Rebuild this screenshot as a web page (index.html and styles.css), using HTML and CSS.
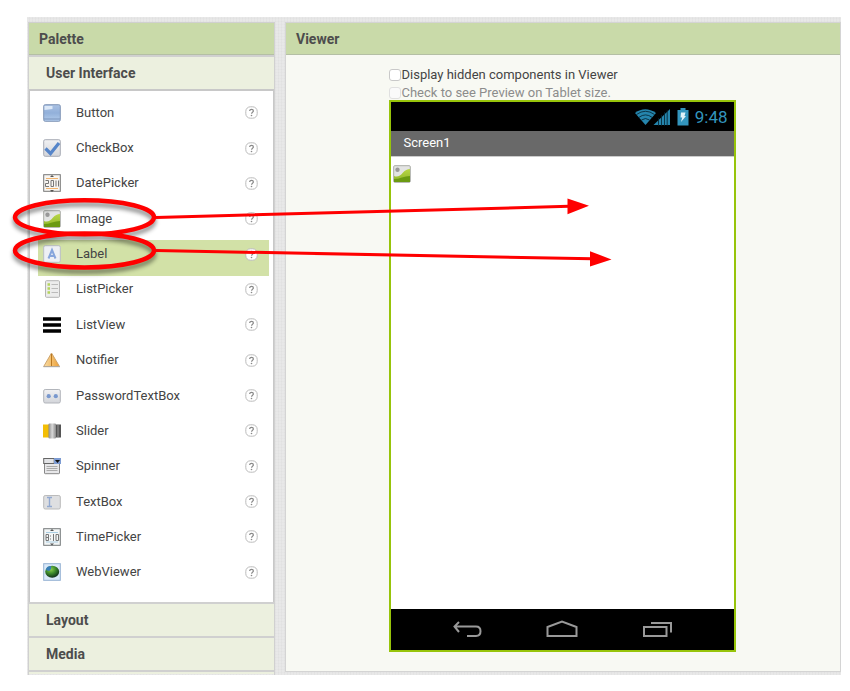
FILE: index.html
```
<!DOCTYPE html>
<html lang="en">
<head>
<meta charset="utf-8">
<title>Designer</title>
<link rel="stylesheet" href="styles.css">
</head>
<body>
<svg class="defs" aria-hidden="true">
  <defs>
    <linearGradient id="blue" x1="0" y1="0" x2="0" y2="1"><stop offset="0" stop-color="#a9c1e3"/><stop offset=".5" stop-color="#92b0da"/><stop offset="1" stop-color="#b4cdec"/></linearGradient>
    <linearGradient id="grey" x1="0" y1="0" x2="0" y2="1"><stop offset="0" stop-color="#f1f1f3"/><stop offset="1" stop-color="#d3d5da"/></linearGradient>
    <linearGradient id="leaf" x1="0" y1="0" x2="0" y2="1"><stop offset="0" stop-color="#b9d645"/><stop offset="1" stop-color="#8db52a"/></linearGradient>
    <linearGradient id="amber" x1="0" y1="0" x2="1" y2="0"><stop offset="0" stop-color="#f8dda6"/><stop offset="1" stop-color="#eea035"/></linearGradient>
    <linearGradient id="knob" x1="0" y1="0" x2="1" y2="0"><stop offset="0" stop-color="#8a8a8a"/><stop offset=".5" stop-color="#d8d8d8"/><stop offset="1" stop-color="#8a8a8a"/></linearGradient>
    <radialGradient id="globe" cx=".4" cy=".3" r=".7"><stop offset="0" stop-color="#8ed04c"/><stop offset=".5" stop-color="#3c8a2c"/><stop offset="1" stop-color="#12301c"/></radialGradient>
    <symbol id="help" viewBox="0 0 13 13"><rect x=".8" y=".8" width="11.4" height="11.4" rx="4.5" fill="#fff" stroke="#bbb"/><path d="M4.700 5.100c0-2.400 3.700-2.300 3.700 0 0 1.200-1.800 1.300-1.800 2.600" fill="none" stroke="#888" stroke-width="1.200"/><circle cx="6.500" cy="9.500" r=".8" fill="#888"/></symbol>
    <symbol id="image" viewBox="0 0 18 18"><rect x=".7" y=".7" width="16.600" height="16.600" rx="1" fill="#e3e4e3" stroke="#a9aca5"/><circle cx="4.500" cy="4.800" r="2.200" fill="#999"/><path d="M1 11q5 2 9-3.500Q13 4 17 4v13H1z" fill="url(#leaf)"/><path d="M1 14q4 0 8-1.500t8-1.500v6H1z" fill="#6b9a12"/></symbol>
  </defs>
</svg>
<main class="workspace">
  <section class="palette">
    <h2 class="panel-title">Palette</h2>
    <button class="section" type="button">User Interface</button>
    <ul class="components">
      <li class="component"><svg class="icon" viewBox="0 0 18 18"><rect x=".7" y=".7" width="16.600" height="16.600" rx="1.500" fill="url(#blue)" stroke="#8297b7"/><path d="M1.500 2h8v3l-8 1z" fill="#dce8f7"/><path d="M1 15h16" stroke="#7892ba"/></svg><span>Button</span><button class="help" type="button" aria-label="Button help"><svg viewBox="0 0 13 13"><use href="#help"/></svg></button></li>
      <li class="component"><svg class="icon" viewBox="0 0 18 18"><rect x=".7" y=".7" width="16.600" height="16.600" rx="1.500" fill="url(#grey)" stroke="#a8acb6"/><path d="M2.500 9.500 7.500 14.500 16 4" fill="none" stroke="#5685c9" stroke-width="3.200"/></svg><span>CheckBox</span><button class="help" type="button" aria-label="CheckBox help"><svg viewBox="0 0 13 13"><use href="#help"/></svg></button></li>
      <li class="component"><svg class="icon" viewBox="0 0 18 18"><rect x=".7" y=".7" width="16.600" height="16.600" fill="#f7f5f2" stroke="#777"/><path d="M3 4.500h12M3 14.500h12" stroke="#f1b36d"/><path d="M7 3h4L9 1zm0 13h4l-2 2z" fill="#555"/><path d="M2.500 6.500h3v3h-3v3h3.500M8 6.500h2.500v6H8zM13 6.500v6M15.500 6.500v6" fill="none" stroke="#777"/></svg><span>DatePicker</span><button class="help" type="button" aria-label="DatePicker help"><svg viewBox="0 0 13 13"><use href="#help"/></svg></button></li>
      <li class="component"><svg class="icon" viewBox="0 0 18 18"><use href="#image"/></svg><span>Image</span><button class="help" type="button" aria-label="Image help"><svg viewBox="0 0 13 13"><use href="#help"/></svg></button></li>
      <li class="component selected"><svg class="icon" viewBox="0 0 18 18"><rect x=".7" y=".7" width="16.600" height="16.600" rx="1.500" fill="#eef0f5" stroke="#b9bdc6"/><path d="M5.500 13.500 9 5l3.500 8.500M6.800 11h4.500" fill="none" stroke="#87a6dc" stroke-width="2"/></svg><span>Label</span><button class="help" type="button" aria-label="Label help"><svg viewBox="0 0 13 13"><use href="#help"/></svg></button></li>
      <li class="component"><svg class="icon" viewBox="0 0 18 18"><rect x="2.500" y=".7" width="14" height="16.600" rx="1" fill="#ececec" stroke="#b5b5b5"/><path d="M4.500 4.500h2.500M4.500 8.500h2.500M4.500 12.500h2.500" stroke="#b4d45d" stroke-width="2.500"/><path d="M8.500 4.500H15M8.500 8.500H15M8.500 12.500H15" stroke="#bbb"/></svg><span>ListPicker</span><button class="help" type="button" aria-label="ListPicker help"><svg viewBox="0 0 13 13"><use href="#help"/></svg></button></li>
      <li class="component"><svg class="icon" viewBox="0 0 18 18"><path d="M0 3h18M0 9h18M0 15h18" stroke="#000" stroke-width="3.600"/></svg><span>ListView</span><button class="help" type="button" aria-label="ListView help"><svg viewBox="0 0 13 13"><use href="#help"/></svg></button></li>
      <li class="component"><svg class="icon" viewBox="0 0 18 18"><path d="M8.500 2 16.500 15.500H.7z" fill="url(#amber)" stroke="#cda36b"/><path d="M8.500 3v12" stroke="#b97821"/><path d="M.5 15.700h16.500" stroke="#aaa"/></svg><span>Notifier</span><button class="help" type="button" aria-label="Notifier help"><svg viewBox="0 0 13 13"><use href="#help"/></svg></button></li>
      <li class="component"><svg class="icon" viewBox="0 0 18 18"><rect x=".7" y="2.500" width="16.600" height="13.500" rx="1.500" fill="url(#grey)" stroke="#b2b5bb"/><circle cx="5.700" cy="9.200" r="2.100" fill="#7998ce"/><circle cx="12.800" cy="9.200" r="2.100" fill="#7998ce"/></svg><span>PasswordTextBox</span><button class="help" type="button" aria-label="PasswordTextBox help"><svg viewBox="0 0 13 13"><use href="#help"/></svg></button></li>
      <li class="component"><svg class="icon" viewBox="0 0 18 18"><path d="M0 2.500h6v13H0z" fill="#f3be05"/><path d="M12 2.500h6v13h-6z" fill="#555"/><path d="M15 3v12" stroke="#999"/><rect x="5.500" y="1.500" width="7.500" height="15" rx="1" fill="url(#knob)"/></svg><span>Slider</span><button class="help" type="button" aria-label="Slider help"><svg viewBox="0 0 13 13"><use href="#help"/></svg></button></li>
      <li class="component"><svg class="icon" viewBox="0 0 18 18"><path d="M1.500 6.500h15v9.500q0 .7-.7.700H2.200q-.7 0-.7-.7z" fill="#e7e7e9" stroke="#888"/><rect x=".7" y="1.500" width="10.500" height="5" fill="#e2e3e6" stroke="#666"/><path d="M11 1h7v6h-7z" fill="#7d9cd3"/><path d="M12 3h5l-2.500 3z" fill="#111"/><path d="M3.500 9.500h11M3.500 11.500h11M3.500 13.500h11" stroke="#aaa"/></svg><span>Spinner</span><button class="help" type="button" aria-label="Spinner help"><svg viewBox="0 0 13 13"><use href="#help"/></svg></button></li>
      <li class="component"><svg class="icon" viewBox="0 0 18 18"><rect x=".7" y="2.500" width="16.600" height="13.500" rx="1.500" fill="#dedfe1" stroke="#bbb"/><path d="M4 4.500h5M4 13.500h5M6.500 4.500v9" stroke="#92a9d0" stroke-width="1.400"/></svg><span>TextBox</span><button class="help" type="button" aria-label="TextBox help"><svg viewBox="0 0 13 13"><use href="#help"/></svg></button></li>
      <li class="component"><svg class="icon" viewBox="0 0 18 18"><rect x=".7" y=".7" width="16.600" height="16.600" fill="#f2f5f6" stroke="#75797a"/><path d="M3 4.500h12M3 14h12" stroke="#a9cde2"/><path d="M7 3h4L9 1zm0 12.500h4l-2 2z" fill="#555"/><path d="M3 6.500h2.500v6H3zM3 9.500h2.500M7.500 7.500v1M7.500 10.500v1M10.500 6v7M13 6.500h2.500v6H13z" fill="none" stroke="#777"/></svg><span>TimePicker</span><button class="help" type="button" aria-label="TimePicker help"><svg viewBox="0 0 13 13"><use href="#help"/></svg></button></li>
      <li class="component"><svg class="icon" viewBox="0 0 18 18"><rect x=".7" y=".7" width="16.600" height="16.600" fill="#d9e9f9" stroke="#94b1d2"/><ellipse cx="9.200" cy="8.800" rx="7" ry="6" fill="url(#globe)"/><path d="M3 7q0-4 5-4 1 3-2 5z" fill="#367db7"/></svg><span>WebViewer</span><button class="help" type="button" aria-label="WebViewer help"><svg viewBox="0 0 13 13"><use href="#help"/></svg></button></li>
    </ul>
    <button class="section" type="button">Layout</button>
    <button class="section" type="button">Media</button>
    <div class="section-edge"></div>
  </section>
  <section class="viewer">
    <h2 class="panel-title">Viewer</h2>
    <div class="stage">
      <label class="option"><input type="checkbox">Display hidden components in Viewer</label>
      <label class="option disabled"><input type="checkbox" disabled>Check to see Preview on Tablet size.</label>
      <div class="phone">
        <div class="status">
          <svg class="signal" viewBox="0 0 35 18" aria-label="Wi-Fi and signal">
            <path d="M0 5Q10-2.500 21 5L10.500 17z" fill="#2585ad"/><path d="M1.500 6.500Q10.500 0 19.500 6.500M4 9.300Q10.500 4.500 17 9.300M6.500 12Q10.500 9 14.500 12" fill="none" stroke="#04202c" stroke-width=".8"/>
            <path d="M18.500 17 35 1v16z" fill="#2585ad"/><path d="M23.500 10v8M26.500 7v11M29.500 4v14M32.200 2v16" stroke="#04202c" stroke-width=".8"/>
          </svg>
          <svg class="battery" viewBox="0 0 12 18" aria-label="Battery charging"><path d="M3.500 0h5v2H11.500v15.500H.5V2h3z" fill="#3395bd"/><path d="M4 4.500h4.500L7.500 8H9l-5 6 1.200-4.500H3.500z" fill="#e0f2f8"/></svg>
          <span>9:48</span>
        </div>
        <div class="titlebar">Screen1</div>
        <div class="canvas"><svg class="icon" viewBox="0 0 18 18"><use href="#image"/></svg></div>
        <div class="navbar">
          <svg viewBox="0 0 32 20"><path d="M8 2 3.500 6.500 8 12M4 6.500h21q4.500 0 4.500 4.700t-4.500 4.700H16" fill="none" stroke="#999" stroke-width="2"/></svg>
          <svg viewBox="0 0 32 20"><path d="M1.500 16V7L16 1.500 30.500 7v9z" fill="none" stroke="#999" stroke-width="2"/></svg>
          <svg viewBox="0 0 32 20"><path d="M3 7h22.500v9H3zM10 3h20v9.500" fill="none" stroke="#999" stroke-width="2"/></svg>
        </div>
      </div>
    </div>
  </section>
</main>
<svg class="annotations" viewBox="0 0 850 691" aria-hidden="true">
  <g class="rings"><ellipse cx="84.500" cy="217.300" rx="69.500" ry="17"/><ellipse cx="84.500" cy="250.500" rx="69.500" ry="17"/></g>
  <path class="lines" d="M156 217.500 569 206.300M156 250.500 592 258.800"/>
  <path class="heads" d="M567.500 198.500 589 205.700 567.500 214.200zM590 251.200 611.500 259.400 590 266.500z"/>
</svg>
</body>
</html>
```

FILE: styles.css
```
* {
  box-sizing: border-box;
}

body {
  position: relative;
  margin: 0;
  padding: 17px 9px 16px 27px;
  background: #fff;
  color: #444;
  font: 400 13px/18px Roboto, sans-serif;
}

button {
  padding: 0;
  border: 0;
  background: none;
  color: inherit;
  font: inherit;
  text-align: left;
}

.defs {
  position: absolute;
  width: 0;
  height: 0;
}

.workspace {
  display: flex;
  gap: 10px;
  padding: 5px 0 0 1px;
  background-color: #e8e8e8;
  background-image:
    repeating-linear-gradient(0deg, transparent 0 2px, rgba(0, 0, 0, .01) 2px 3px),
    repeating-linear-gradient(90deg, transparent 0 2px, rgba(0, 0, 0, .02) 2px 3px);
}

.palette {
  display: flex;
  flex: 0 0 247px;
  flex-direction: column;
  border: 1px solid #d0d0d0;
  border-bottom: 0;
}

.panel-title {
  margin: 0;
  padding: 7px 10px 6px;
  border-bottom: 1px solid #b4bfa4;
  background: #c9daa9;
  color: #4d4d4d;
  font-size: 14px;
  font-weight: 700;
  line-height: 18px;
}

.section {
  padding: 8px 17px;
  border-top: 2px solid #d0d0d0;
  background: #ecf0df;
  color: #4d4d4d;
  font-size: 14px;
  font-weight: 700;
  line-height: 16px;
}

.section-edge {
  height: 4px;
  border-top: 2px solid #d0d0d0;
  background: #ecf0df;
}

.components {
  display: grid;
  grid-template-rows: repeat(14, 1fr);
  min-height: 513px;
  margin: 0;
  padding: 8px 4px 8px 8px;
  border: 1px solid #c8c8c8;
  border-top-width: 2px;
  border-bottom: 0;
  background: #fff;
  list-style: none;
}

.component {
  display: flex;
  align-items: center;
  padding: 0 11px 8px 5px;
}

.component span {
  flex: 1;
}

.selected {
  background: #d2e1a7;
}

.icon {
  flex: none;
  width: 18px;
  height: 18px;
  margin-right: 15px;
}

.help,
.help svg {
  display: block;
  width: 13px;
  height: 13px;
}

.viewer {
  display: flex;
  flex: 1;
  flex-direction: column;
  margin-bottom: 3px;
  border: 1px solid #d4d4d4;
}

.stage {
  flex: 1;
  width: 100%;
  padding: 11px 2px 19px 0;
  background: #f8f9f3;
}

.option,
.phone {
  width: 347px;
  margin: 0 auto;
}

.option {
  display: flex;
  align-items: center;
}

.option input {
  width: 12px;
  height: 12px;
  margin: 0 1px 0 0;
  border: 1px solid #c9c9c9;
  border-radius: 3px;
  background: #fff;
  appearance: none;
}

.disabled {
  color: #8c8c8c;
}

.disabled input {
  border-color: #e0e0e0;
  background: #fafafa;
}

.phone {
  margin-top: -2px;
  border: 2px solid #97c40a;
  background: #fff;
}

.status {
  display: flex;
  align-items: center;
  justify-content: flex-end;
  height: 29px;
  padding-right: 6px;
  background: #000;
  color: #3395bd;
  font-size: 17px;
}

.signal {
  width: 35px;
  height: 18px;
  margin-right: 7px;
}

.battery {
  width: 12px;
  height: 18px;
  margin-right: 6px;
}

.titlebar {
  padding: 3px 13px 4px;
  border-bottom: 1px solid #ccc;
  background: #696969;
  color: #fff;
}

.canvas {
  min-height: 452px;
  padding: 8px 2px;
}

.canvas .icon {
  display: block;
}

.navbar {
  display: flex;
  align-items: center;
  justify-content: center;
  gap: 63px;
  height: 41px;
  background: #000;
}

.navbar svg {
  width: 32px;
  height: 20px;
}

.annotations {
  position: absolute;
  top: 0;
  left: 0;
  width: 850px;
  height: 691px;
  pointer-events: none;
}

.rings {
  fill: none;
  stroke: #f00;
  stroke-width: 4.5px;
  filter: drop-shadow(0 4px 2px rgba(0, 0, 0, .45));
}

.lines {
  fill: none;
  stroke: #f00;
  stroke-width: 3px;
}

.heads {
  fill: #f00;
}
```
